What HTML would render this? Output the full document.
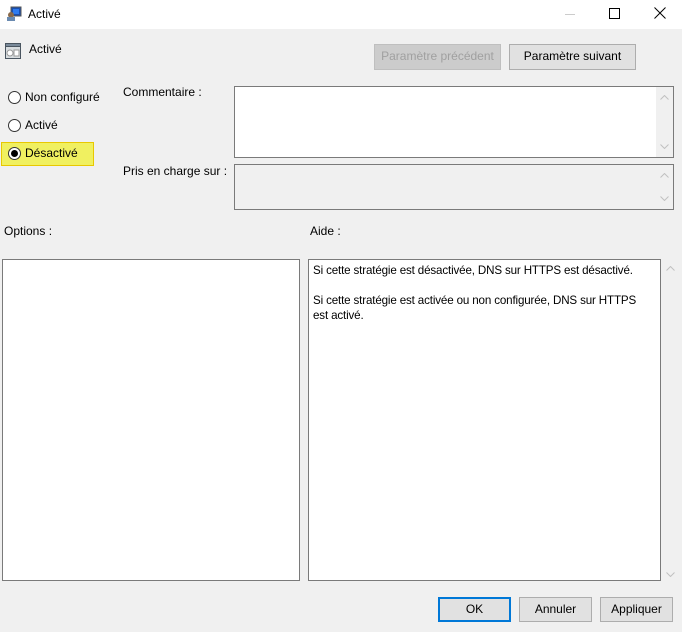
<!DOCTYPE html>
<html><head><meta charset="utf-8"><style>
*{box-sizing:border-box;margin:0;padding:0}
body{width:682px;height:632px;background:#f0f0f0;font-family:"Liberation Sans",sans-serif;font-size:12px;color:#000;position:relative;overflow:hidden}
.a{position:absolute}
.box{position:absolute;background:#fff;border:1px solid #7a7a7a}
.btn{position:absolute;background:#e1e1e1;border:1px solid #adadad;text-align:center;line-height:22px;font-size:12px}
.rad{position:absolute;width:13px;height:13px;border:1px solid #333;border-radius:50%;background:#fff}
.up,.dn{position:absolute;width:9px;height:5px}
</style></head><body>
<div class="a" style="left:0;top:0;width:682px;height:29px;background:#fff"></div>
<svg class="a" style="left:6px;top:6px" width="16" height="16"><rect x="5" y="1" width="10" height="9" fill="#1a4fb0" stroke="#555"/><rect x="7" y="3" width="6" height="5" fill="#2e7bf0"/><circle cx="5" cy="9" r="3" fill="#8a6a4a"/><rect x="1" y="11" width="8" height="4" fill="#6a8ab0"/></svg>
<div class="a" style="left:28px;top:7px">Activé</div>
<div class="a" style="left:565px;top:14px;width:10px;height:1px;background:#ccc"></div>
<div class="a" style="left:609px;top:8px;width:11px;height:11px;border:1px solid #000"></div>
<svg class="a" style="left:654px;top:7px" width="12" height="12"><path d="M0.5 0.5L11.5 11.5M11.5 0.5L0.5 11.5" stroke="#000" stroke-width="1"/></svg>
<svg class="a" style="left:5px;top:43px" width="16" height="16"><rect x="0" y="0" width="16" height="16" fill="#4a5560"/><rect x="1" y="4" width="14" height="11" fill="#d8dde0"/><rect x="1" y="1" width="14" height="2" fill="#7a8a9a"/><circle cx="5" cy="10" r="3" fill="#fff" stroke="#999"/><rect x="9" y="7" width="5" height="6" fill="#fff" stroke="#999"/></svg>
<div class="a" style="left:29px;top:42px">Activé</div>
<div class="btn" style="left:374px;top:44px;width:127px;height:26px;color:#a0a0a0;background:#cccccc;border-color:#bfbfbf">Paramètre précédent</div>
<div class="btn" style="left:509px;top:44px;width:127px;height:26px">Paramètre suivant</div>
<div class="rad" style="left:8px;top:91px"></div><div class="a" style="left:25px;top:90px">Non configuré</div>
<div class="rad" style="left:8px;top:119px"></div><div class="a" style="left:25px;top:118px">Activé</div>
<div class="a" style="left:1px;top:142px;width:93px;height:24px;background:#f0f060;border:1px solid #e8c800"></div>
<div class="rad" style="left:8px;top:147px"><div class="a" style="left:2px;top:2px;width:7px;height:7px;border-radius:50%;background:#000"></div></div>
<div class="a" style="left:25px;top:146px">Désactivé</div>
<div class="a" style="left:123px;top:85px">Commentaire :</div>
<div class="a" style="left:123px;top:164px">Pris en charge sur :</div>
<div class="box" style="left:234px;top:86px;width:440px;height:72px"><div class="a" style="right:0;top:0;width:17px;height:70px;background:#f0f0f0"></div>
<svg class="up" style="right:4px;top:8px" viewBox="0 0 9 5"><path d="M0.5 4.5L4.5 0.5L8.5 4.5" fill="none" stroke="#c0c0c0"/></svg>
<svg class="dn" style="right:4px;bottom:8px" viewBox="0 0 9 5"><path d="M0.5 0.5L4.5 4.5L8.5 0.5" fill="none" stroke="#c0c0c0"/></svg></div>
<div class="box" style="left:234px;top:164px;width:440px;height:46px;background:#f0f0f0">
<svg class="up" style="right:4px;top:8px" viewBox="0 0 9 5"><path d="M0.5 4.5L4.5 0.5L8.5 4.5" fill="none" stroke="#c0c0c0"/></svg>
<svg class="dn" style="right:4px;bottom:8px" viewBox="0 0 9 5"><path d="M0.5 0.5L4.5 4.5L8.5 0.5" fill="none" stroke="#c0c0c0"/></svg></div>
<div class="a" style="left:4px;top:224px">Options :</div>
<div class="a" style="left:310px;top:224px">Aide :</div>
<div class="box" style="left:2px;top:259px;width:298px;height:322px"></div>
<div class="box" style="left:308px;top:259px;width:353px;height:322px;padding:3px 4px;line-height:15px;font-size:11.6px;letter-spacing:-0.15px">Si cette stratégie est désactivée, DNS sur HTTPS est désactivé.<br><br>Si cette stratégie est activée ou non configurée, DNS sur HTTPS<br>est activé.</div>
<svg class="up" style="left:666px;top:266px" viewBox="0 0 9 5"><path d="M0.5 4.5L4.5 0.5L8.5 4.5" fill="none" stroke="#c0c0c0"/></svg>
<svg class="dn" style="left:666px;top:572px" viewBox="0 0 9 5"><path d="M0.5 0.5L4.5 4.5L8.5 0.5" fill="none" stroke="#c0c0c0"/></svg>
<div class="btn" style="left:438px;top:597px;width:73px;height:25px;border:2px solid #0078d7;line-height:21px">OK</div>
<div class="btn" style="left:519px;top:597px;width:73px;height:25px">Annuler</div>
<div class="btn" style="left:600px;top:597px;width:73px;height:25px">Appliquer</div>
</body></html>
